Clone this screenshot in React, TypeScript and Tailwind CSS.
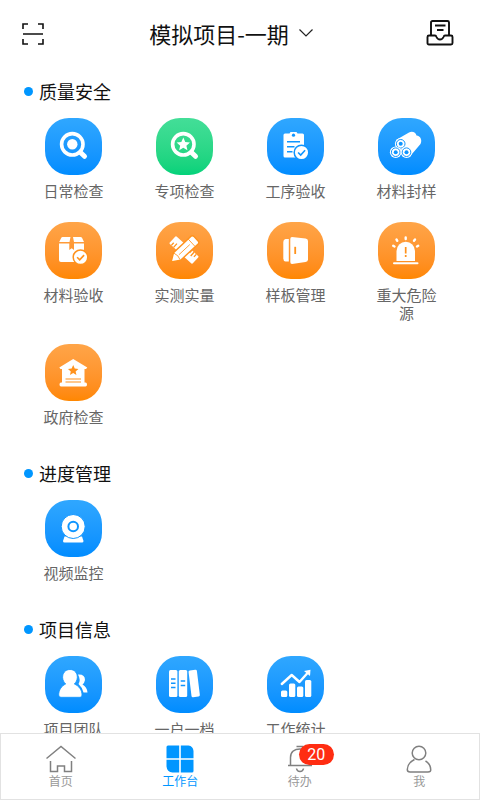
import type { ReactNode } from 'react';

type Tone = 'blue' | 'green' | 'orange';

type Tool = {
    name: string;
    tone: Tone;
    icon: ReactNode;
};

type Section = {
    title: string;
    tools: Tool[];
};

const BLUE = '#0f95ff';
const ORANGE = '#ff921c';

const toneClass: Record<Tone, string> = {
    blue: 'from-[#2fa7ff] to-[#008cff]',
    green: 'from-[#43de98] to-[#02d27a]',
    orange: 'from-[#ffa548] to-[#ff8700]',
};

const STAR = 'M0-6 1.7-2.2 5.8-1.8 2.7 1 3.6 5 0 2.9-3.6 5-2.7 1-5.8-1.8-1.7-2.2Z';

function CheckBadge({ x, y, color }: { x: number; y: number; color: string }) {
    return (
        <g transform={`translate(${x} ${y})`}>
            <circle r="7.3" fill="#fff" stroke={color} strokeWidth="1.5" />
            <path d="M-3.4 0-0.8 2.6 3.6-2.2" fill="none" stroke={color} strokeWidth="1.6" />
        </g>
    );
}

function Lens({ children }: { children: ReactNode }) {
    return (
        <>
            <circle cx="27.3" cy="26.3" r="10.7" fill="none" stroke="#fff" strokeWidth="3.6" />
            <path d="M35.5 34.5 39.5 38.3" stroke="#fff" strokeWidth="5" strokeLinecap="round" />
            {children}
        </>
    );
}

const dailyIcon = (
    <Lens>
        <circle cx="27.3" cy="26.3" r="5.2" />
    </Lens>
);

const specialIcon = (
    <Lens>
        <path d={STAR} transform="translate(27.3 26.5) scale(1.15)" />
    </Lens>
);

const processIcon = (
    <>
        <path d="M18 15.5h4.5l1-1.5h6l1 1.5h5a1.5 1.5 0 0 1 1.5 1.5v22.500H18a1.500 1.500 0 0 1-1.500-1.500V17a1.500 1.500 0 0 1 1.500-1.500Z" />
        <circle cx="26.5" cy="17.2" r="1.6" fill={BLUE} />
        <path d="M20 23.700H33M20 28.700H27.500M20 33.700H25.500" stroke={BLUE} strokeWidth="1.6" />
        <CheckBadge x={34.5} y={34.5} color={BLUE} />
    </>
);

const pipeIcon = (
    <>
        <path d="M18 22 31 14.5C34 12.8 38 14.2 38.5 17.5 42.5 18 44.500 22 42.5 26L31 39.500 24 32Z" />
        {[
            [22.7, 25.8],
            [17.7, 34.2],
            [28.5, 34.2],
        ].map(([x, y]) => (
            <g key={`${x}-${y}`}>
                <circle cx={x} cy={y} r="5.8" />
                <circle cx={x} cy={y} r="4.3" fill="none" stroke={BLUE} strokeWidth="1" />
                <circle cx={x} cy={y} r="2" fill={BLUE} />
            </g>
        ))}
    </>
);

const boxIcon = (
    <>
        <path d="M17.5 15H25.5L24.5 20H14.2L16.3 15.8Q16.7 15 17.5 15ZM28 15H35.5Q36.5 15 37 15.8L39 20H29Z" />
        <path d="M14 21.5H24.3V28L26.7 26.3 29 28V21.5H39V38Q39 40 37 40H16Q14 40 14 38Z" />
        <CheckBadge x={35.5} y={35.3} color={ORANGE} />
    </>
);

const measureIcon = (
    <>
        <g transform="rotate(42 28 28)">
            <rect x="12.5" y="23" width="31" height="10" rx="1" />
            <path d="M15.5 33v-3.500M18.500 33v-5M37 23v5M40 23v3.500M34 23v3.500" stroke={ORANGE} strokeWidth="1.3" />
        </g>
        <g transform="rotate(-43 28 28)">
            <path
                d="M10.5 28 18.500 22.800H42.5Q44.5 22.800 44.5 25V31Q44.5 33.200 42.5 33.200H18.500Z"
                stroke={ORANGE}
                strokeWidth="1.4"
            />
            <path d="M18.500 23.500Q20.500 28 18.500 32.500M38.5 23V33M21 28H36" fill="none" stroke={ORANGE} strokeWidth="0.8" />
        </g>
    </>
);

const doorIcon = (
    <>
        <path d="M21.8 17V39.5H18.5Q16.3 39 16.3 36.5V20Q16.3 17.5 18.5 17Z" />
        <path d="M25 15 38.5 16.5Q41 16.8 41 19V37.5Q41 39.5 38.5 40L25 42Q23.3 42 23.3 40V17Q23.3 15 25 15Z" />
        <path d="M28.2 24.8V32" stroke={ORANGE} strokeWidth="1.8" />
    </>
);

const alarmIcon = (
    <>
        <path d="M18.500 39V29A9.2 9.2 0 0 1 37 29V39Z" />
        <path d="M16 41.3H39.5" stroke="#fff" strokeWidth="2" strokeLinecap="round" />
        <path
            d="M27.7 15.5V17M18.500 17.500 19.3 18.8M37 17.500 36 18.8M15.200 23.8 16.500 24.500M40.200 23.8 39 24.500"
            stroke="#fff"
            strokeWidth="2.4"
            strokeLinecap="round"
        />
        <path d="M27.7 25V31.5M27.7 33V35" stroke={ORANGE} strokeWidth="1.7" />
    </>
);

const governmentIcon = (
    <>
        <path d="M28.2 15 42.3 23.5 41 25H39.5V38.5H40.5Q42 38.5 42 40.5T40.5 42.5H16Q14.5 42.5 14.5 40.5T16 38.5H17V25H15.5L14.3 23.5Z" />
        <path d={STAR} transform="translate(28.2 26.5) scale(.9)" fill={ORANGE} />
        <path d="M20.5 35H36M20.5 38H36" stroke={ORANGE} strokeWidth="1.1" />
    </>
);

const cameraIcon = (
    <>
        <path d="M19.5 36.5H37L38.5 41Q38.5 42.5 37 42.5H19.5Q18 42.5 18 41Z" />
        <circle cx="28.2" cy="26.5" r="12" stroke={BLUE} strokeWidth="1" />
        <circle cx="28.2" cy="26.5" r="4.8" fill="none" stroke={BLUE} strokeWidth="2" />
    </>
);

const teamIcon = (
    <>
        <path d="M33 18.5Q40 18 40 24 39.5 27 37.5 28.5 42 31 42.5 36.5H38.5Q37 31 33.5 28 36 24 33 18.5Z" />
        <path
            d="M25 13.5C30 13.5 32.5 17.5 32.3 21.5 32.2 24 31 26.5 29.3 28 34 30 37 34 37 39Q37 41.3 35 41.3H16Q13.7 41.3 13.7 39C13.7 34 16.5 30 20.7 28 19 26.5 17.7 24 17.6 21.5 17.5 17.5 20 13.5 25 13.5Z"
            stroke={BLUE}
            strokeWidth="0.8"
        />
    </>
);

const booksIcon = (
    <>
        <rect x="13" y="14" width="8.4" height="27" rx="1.5" />
        <rect x="22.8" y="14" width="8.4" height="27" rx="1.5" />
        <rect x="34" y="14" width="8.4" height="27" rx="1.5" transform="rotate(-7 38 27.5)" />
        <path d="M15 23H19.5M15 27.3H19.5M15 31.5H19.5M24.7 25H29.2M24.7 29.5H29.2" stroke={BLUE} strokeWidth="1.4" />
    </>
);

const chartIcon = (
    <>
        <rect x="14" y="34.5" width="6.3" height="6.5" rx="1.5" />
        <rect x="22" y="27.5" width="6.3" height="13.5" rx="1.5" />
        <rect x="30" y="30.5" width="6.3" height="10.5" rx="1.5" />
        <rect x="38" y="24" width="6.3" height="17" rx="1.5" />
        <path
            d="M14.8 28 24.7 19 32.5 26 41 16.5"
            fill="none"
            stroke="#fff"
            strokeWidth="2.4"
            strokeLinecap="round"
            strokeLinejoin="round"
        />
        <path d="M37 15 43.5 13.8 43 20Z" />
    </>
);

const sections: Section[] = [
    {
        title: '质量安全',
        tools: [
            { name: '日常检查', tone: 'blue', icon: dailyIcon },
            { name: '专项检查', tone: 'green', icon: specialIcon },
            { name: '工序验收', tone: 'blue', icon: processIcon },
            { name: '材料封样', tone: 'blue', icon: pipeIcon },
            { name: '材料验收', tone: 'orange', icon: boxIcon },
            { name: '实测实量', tone: 'orange', icon: measureIcon },
            { name: '样板管理', tone: 'orange', icon: doorIcon },
            { name: '重大危险源', tone: 'orange', icon: alarmIcon },
            { name: '政府检查', tone: 'orange', icon: governmentIcon },
        ],
    },
    {
        title: '进度管理',
        tools: [{ name: '视频监控', tone: 'blue', icon: cameraIcon }],
    },
    {
        title: '项目信息',
        tools: [
            { name: '项目团队', tone: 'blue', icon: teamIcon },
            { name: '一户一档', tone: 'blue', icon: booksIcon },
            { name: '工作统计', tone: 'blue', icon: chartIcon },
        ],
    },
];

function ToolButton({ tool }: { tool: Tool }) {
    return (
        <button type="button" className="flex w-[60px] flex-col items-center gap-[7px]">
            <span className={`size-[57px] rounded-[24px] bg-linear-to-b ${toneClass[tool.tone]}`}>
                <svg viewBox="0 0 57 57" className="size-full" fill="#fff" aria-hidden="true">
                    {tool.icon}
                </svg>
            </span>
            <span className="text-[15px] leading-[18px] text-[#666]">{tool.name}</span>
        </button>
    );
}

function Header() {
    return (
        <header className="flex h-[68px] shrink-0 items-center justify-between pr-[26px] pl-[22px]">
            <button type="button" aria-label="扫一扫">
                <svg viewBox="0 0 22 22" className="size-[22px]" fill="none" stroke="#111" strokeWidth="1.6" aria-hidden="true">
                    <path d="M1 6V1H6M16 1H21V6M1 16V21H6M16 21H21V16M1 11H21" />
                </svg>
            </button>
            <button type="button" className="flex items-center gap-2.5 pr-2 pb-0.5 text-[22px] leading-7 text-[#111]">
                模拟项目-一期
                <svg viewBox="0 0 14 8" className="h-2 w-3.5" fill="none" stroke="#222" strokeWidth="1.2" aria-hidden="true">
                    <path d="M0.5 0.5 7 7 13.5 0.5" />
                </svg>
            </button>
            <button type="button" aria-label="收件箱">
                <svg
                    viewBox="0 0 28 28"
                    className="size-7"
                    fill="none"
                    stroke="#111"
                    strokeWidth="1.9"
                    strokeLinejoin="round"
                    aria-hidden="true"
                >
                    <path d="M5 15V2.500Q5 1 6.5 1H21.5Q23 1 23 2.500V15" />
                    <path d="M3 15.500H9Q10 15.500 10.500 17 11.500 19.500 14 19.500T17.500 17Q18 15.500 19 15.500H25Q26.5 15.500 26.5 17V23Q26.5 24.500 25 24.500H3Q1.5 24.500 1.5 23V17Q1.5 15.500 3 15.500Z" />
                    <path d="M9 5.500H19.5M11 10H17.5" />
                </svg>
            </button>
        </header>
    );
}

function TabBar() {
    return (
        <nav className="grid h-[67px] shrink-0 grid-cols-4 border border-[#e2e2e2] bg-white text-xs leading-4 text-[#999]">
            <a href="#home" className="flex flex-col items-center pt-[11px]">
                <svg viewBox="0 0 30 28" className="h-7 w-[30px]" fill="none" stroke="#808080" strokeWidth="1.5" aria-hidden="true">
                    <path d="M0.5 13.5 15 1.5 29.5 13.5M4.500 16V26.5H11.5V21H18.500V26.5H25.5V16" />
                </svg>
                首页
            </a>
            <a href="#workbench" aria-current="page" className="flex flex-col items-center pt-[11px] text-[#0096ff]">
                <svg viewBox="0 0 28 28" className="size-7" fill="currentColor" aria-hidden="true">
                    <path d="M2 0.5H13.200V13.200H0.5V2Q0.5 0.5 2 0.5ZM14.800 0.5H22.500Q27 1 27.500 6V13.200H14.800ZM0.5 14.800H13.200V27.5H6.500Q1 27 0.5 21.500ZM14.800 14.800H27.5V26Q27.5 27.5 26 27.5H14.800Z" />
                </svg>
                工作台
            </a>
            <a href="#todo" className="flex flex-col items-center pt-[11px]">
                <span className="relative">
                    <svg viewBox="0 0 28 28" className="size-7" fill="none" stroke="#808080" strokeWidth="1.5" aria-hidden="true">
                        <path d="M10.500 1.5H17.500M4.500 20V12.5C4.500 7 8.500 4 14 4S23.500 7 23.500 12.5V20M2 20.5H26M10.500 23.5Q11 26.5 14 26.5T17.500 23.5" />
                    </svg>
                    <span className="absolute -top-px left-[13px] h-[21px] w-[35px] rounded-full bg-[#ff2d12] text-center font-['Roboto'] text-base leading-[21px] text-white">
                        20
                    </span>
                </span>
                待办
            </a>
            <a href="#me" className="flex flex-col items-center pt-[11px]">
                <svg viewBox="0 0 28 28" className="size-7" fill="none" stroke="#808080" strokeWidth="1.5" aria-hidden="true">
                    <circle cx="14" cy="8" r="6.8" />
                    <path d="M9.5 14.5Q2.500 18 2.3 24.5 2.3 27 5 27H23Q26 27 25.7 24.5 25.5 19 20.5 16" />
                </svg>
                我
            </a>
        </nav>
    );
}

function App() {
    return (
        <div className="flex h-screen flex-col bg-white font-['Noto_Sans_CJK_SC',sans-serif]">
            <Header />
            <main className="flex min-h-0 flex-1 flex-col gap-[34px] overflow-y-auto pt-2.5 pb-6 [scrollbar-width:none]">
                {sections.map((section) => (
                    <section key={section.title}>
                        <h2 className="flex items-center gap-1.5 pl-6 text-lg leading-[26px] text-[#111]">
                            <span className="size-[9px] rounded-full bg-[#0096ff]" />
                            {section.title}
                        </h2>
                        <div className="mt-3.5 grid grid-cols-4 justify-items-center gap-y-[22px] px-[18px]">
                            {section.tools.map((tool) => (
                                <ToolButton key={tool.name} tool={tool} />
                            ))}
                        </div>
                    </section>
                ))}
            </main>
            <TabBar />
        </div>
    );
}

export default App;
